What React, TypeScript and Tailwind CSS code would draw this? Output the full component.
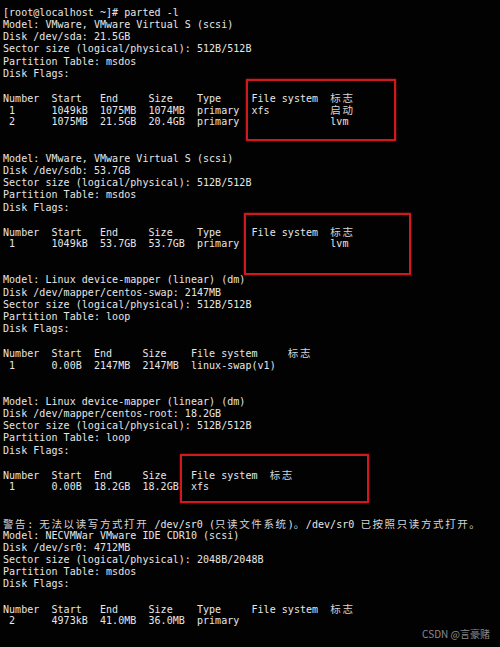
const LINES: string[] = [
  "[root@localhost ~]# parted -l",
  "Model: VMware, VMware Virtual S (scsi)",
  "Disk /dev/sda: 21.5GB",
  "Sector size (logical/physical): 512B/512B",
  "Partition Table: msdos",
  "Disk Flags:",
  "",
  "Number  Start   End     Size    Type     File system  标志",
  " 1      1049kB  1075MB  1074MB  primary  xfs          启动",
  " 2      1075MB  21.5GB  20.4GB  primary               lvm",
  "",
  "",
  "Model: VMware, VMware Virtual S (scsi)",
  "Disk /dev/sdb: 53.7GB",
  "Sector size (logical/physical): 512B/512B",
  "Partition Table: msdos",
  "Disk Flags:",
  "",
  "Number  Start   End     Size    Type     File system  标志",
  " 1      1049kB  53.7GB  53.7GB  primary               lvm",
  "",
  "",
  "Model: Linux device-mapper (linear) (dm)",
  "Disk /dev/mapper/centos-swap: 2147MB",
  "Sector size (logical/physical): 512B/512B",
  "Partition Table: loop",
  "Disk Flags:",
  "",
  "Number  Start  End     Size    File system     标志",
  " 1      0.00B  2147MB  2147MB  linux-swap(v1)",
  "",
  "",
  "Model: Linux device-mapper (linear) (dm)",
  "Disk /dev/mapper/centos-root: 18.2GB",
  "Sector size (logical/physical): 512B/512B",
  "Partition Table: loop",
  "Disk Flags:",
  "",
  "Number  Start  End     Size    File system  标志",
  " 1      0.00B  18.2GB  18.2GB  xfs",
  "",
  "",
  "警告: 无法以读写方式打开 /dev/sr0 (只读文件系统)。/dev/sr0 已按照只读方式打开。",
  "Model: NECVMWar VMware IDE CDR10 (scsi)",
  "Disk /dev/sr0: 4712MB",
  "Sector size (logical/physical): 2048B/2048B",
  "Partition Table: msdos",
  "Disk Flags:",
  "",
  "Number  Start   End     Size    Type     File system  标志",
  " 2      4973kB  41.0MB  36.0MB  primary",
]

// wide chars take two terminal cells
function isWide(ch: string) {
  return ch.charCodeAt(0) > 0x2e80
}

function Line({ text }: { text: string }) {
  const parts: { wide: boolean; s: string }[] = []
  for (const ch of text) {
    const wide = isWide(ch)
    const last = parts[parts.length - 1]
    if (!wide && last && !last.wide) last.s += ch
    else parts.push({ wide, s: ch })
  }
  return (
    <div className="h-[12.16px] leading-[12.16px] whitespace-pre">
      {parts.map((p, i) =>
        p.wide ? (
          <span
            key={i}
            className="inline-block w-[12.12px] text-[10.5px] leading-[12.16px] font-['Noto_Sans_CJK_SC',sans-serif] text-[#d6d6d6]"
          >
            {p.s}
          </span>
        ) : (
          <span key={i}>{p.s || " "}</span>
        )
      )}
    </div>
  )
}

function Box({ className }: { className: string }) {
  return <div className={"absolute border-2 border-[#d0191e] shadow-[0_0_2px_#a01010] " + className} />
}

export default function App() {
  return (
    <div className="relative w-[500px] h-[647px] overflow-hidden bg-[#020202]">
      <div className="pl-[3px] pt-[7px] text-[10px] tracking-[0.04px] text-[#e6e6e6] font-['DejaVu_Sans_Mono',monospace]">
        {LINES.map((l, i) => (
          <Line key={i} text={l} />
        ))}
      </div>

      <Box className="left-[246px] top-[79px] w-[150px] h-[62px]" />
      <Box className="left-[244px] top-[213px] w-[167px] h-[62px]" />
      <Box className="left-[180px] top-[454px] w-[189px] h-[49px]" />

      <div className="absolute right-[10px] bottom-[6px] text-[10px] text-[#8c8c8c] font-['Noto_Sans_CJK_SC',sans-serif]">
        CSDN @言豪赌
      </div>
    </div>
  )
}
